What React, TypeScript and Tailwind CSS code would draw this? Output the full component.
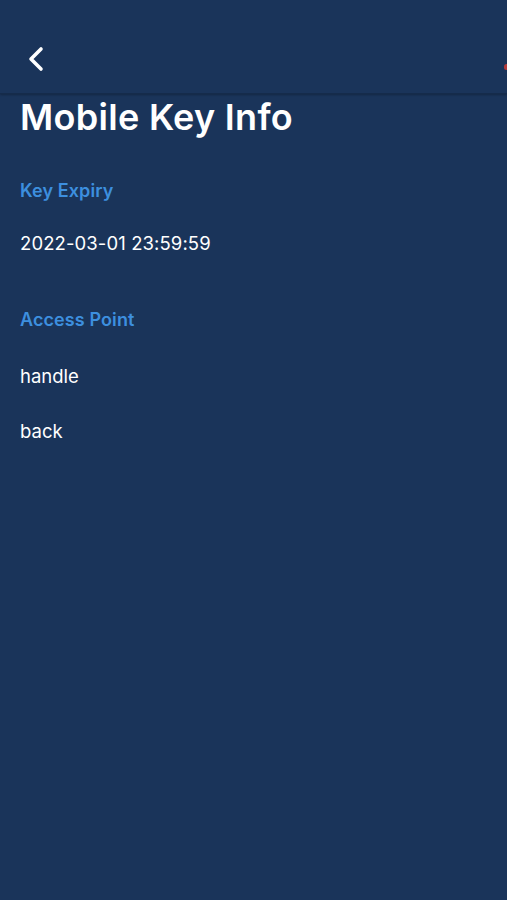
export default function App() {
  return (
    <div className="min-h-[900px] w-full bg-[#1a345a] text-white font-['Inter','Noto_Sans',sans-serif]">
      {/* Header */}
      <div className="relative h-[94px] bg-[#1a345a] border-b border-[#152b4b] shadow-[0_1px_2px_rgba(0,0,0,0.25)]">
        <button className="absolute left-[25px] top-[46px] p-0">
          <svg width="22" height="26" viewBox="0 0 22 26" fill="none">
            <path d="M16 3 L6 13 L16 23" stroke="white" strokeWidth="3.6" strokeLinecap="round" strokeLinejoin="round" />
          </svg>
        </button>
        <span className="absolute right-[-2px] top-[64px] h-[6px] w-[5px] rounded-full bg-[#b23a3a]" />
      </div>

      <div className="px-[20px]">
        <h1 className="mt-[1px] text-[36px] font-semibold leading-[44px] tracking-[0.3px]">Mobile Key Info</h1>

        <section className="mt-[40px]">
          <h2 className="text-[18px] font-semibold leading-[24px] tracking-[0.1px] text-[#3d8fdf]">Key Expiry</h2>
          <p className="mt-[28px] text-[18.5px] leading-[24px] tracking-[0.1px]">2022-03-01 23:59:59</p>
        </section>

        <section className="mt-[53px]">
          <h2 className="text-[18px] font-semibold leading-[24px] tracking-[0.1px] text-[#3d8fdf]">Access Point</h2>
          <p className="mt-[32px] text-[18.5px] leading-[24px]">handle</p>
          <p className="mt-[31px] text-[18.5px] leading-[24px]">back</p>
        </section>
      </div>
    </div>
  );
}
